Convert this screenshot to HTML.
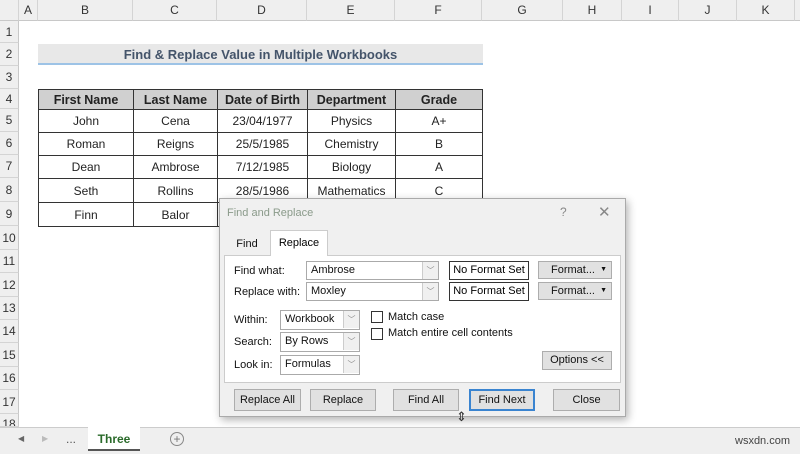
<!DOCTYPE html>
<html><head><meta charset="utf-8"><style>
*{box-sizing:border-box;margin:0;padding:0}
body{width:800px;height:454px;overflow:hidden;background:#fff;font-family:"Liberation Sans",sans-serif;position:relative}
.a{position:absolute}
.ch{position:absolute;top:0;height:21px;background:#efefef;border-right:1px solid #d4d4d4;border-bottom:1px solid #c8c8c8;font-size:12px;color:#333;text-align:center;line-height:21px}
.rh{position:absolute;left:0;width:19px;background:#efefef;border-right:1px solid #c8c8c8;border-bottom:1px solid #d4d4d4;font-size:12px;color:#333;text-align:center}
table{position:absolute;left:38px;top:89px;border-collapse:collapse;font-size:12px;color:#222}
td{border:1px solid #333;text-align:center;padding:0}
.btn{position:absolute;height:22px;background:#e1e1e1;border:1px solid #adadad;font-size:11px;text-align:center;line-height:20px;color:#111}
.lbl{position:absolute;font-size:11px;color:#111}
.inp{position:absolute;height:19px;background:#fff;border:1px solid #aaa;font-size:11px;line-height:17px;padding-left:4px;color:#111}
.dd{position:absolute;right:0;top:0;width:16px;height:17px;border-left:1px solid #ccc;background:#f0f0f0;color:#888;font-size:8px;text-align:center;line-height:17px}
.cb{position:absolute;width:12px;height:12px;border:1px solid #333;background:#fff}
</style></head><body>
<div class="ch" style="left:0;width:19px"></div>
<div class="ch" style="left:19px;width:19px">A</div>
<div class="ch" style="left:38px;width:95px">B</div>
<div class="ch" style="left:133px;width:84px">C</div>
<div class="ch" style="left:217px;width:90px">D</div>
<div class="ch" style="left:307px;width:88px">E</div>
<div class="ch" style="left:395px;width:87px">F</div>
<div class="ch" style="left:482px;width:81px">G</div>
<div class="ch" style="left:563px;width:59px">H</div>
<div class="ch" style="left:622px;width:57px">I</div>
<div class="ch" style="left:679px;width:58px">J</div>
<div class="ch" style="left:737px;width:58px">K</div>
<div class="ch" style="left:795px;width:10px"></div>

<div class="rh" style="top:21px;height:22px;line-height:22px">1</div>
<div class="rh" style="top:43px;height:23px;line-height:23px">2</div>
<div class="rh" style="top:66px;height:23px;line-height:23px">3</div>
<div class="rh" style="top:89px;height:20px;line-height:20px">4</div>
<div class="rh" style="top:109px;height:23px;line-height:23px">5</div>
<div class="rh" style="top:132px;height:23px;line-height:23px">6</div>
<div class="rh" style="top:155px;height:23px;line-height:23px">7</div>
<div class="rh" style="top:178px;height:24px;line-height:24px">8</div>
<div class="rh" style="top:202px;height:24px;line-height:24px">9</div>
<div class="rh" style="top:226px;height:24px;line-height:24px">10</div>
<div class="rh" style="top:250px;height:23px;line-height:23px">11</div>
<div class="rh" style="top:273px;height:24px;line-height:24px">12</div>
<div class="rh" style="top:297px;height:23px;line-height:23px">13</div>
<div class="rh" style="top:320px;height:23px;line-height:23px">14</div>
<div class="rh" style="top:343px;height:24px;line-height:24px">15</div>
<div class="rh" style="top:367px;height:23px;line-height:23px">16</div>
<div class="rh" style="top:390px;height:24px;line-height:24px">17</div>
<div class="rh" style="top:414px;height:13px;line-height:20px;overflow:hidden">18</div>

<div class="a" style="left:38px;top:44px;width:445px;height:21px;background:#e8e8e8;border-bottom:2px solid #9dc3e6;font-size:13px;font-weight:bold;color:#44546a;text-align:center;line-height:22px">Find &amp; Replace Value in Multiple Workbooks</div>

<table>
<tr style="height:20px;background:#d0d0d0;font-weight:bold;font-size:12.5px"><td style="width:95px">First Name</td><td style="width:84px">Last Name</td><td style="width:90px">Date of Birth</td><td style="width:88px">Department</td><td style="width:87px">Grade</td></tr>
<tr style="height:23px"><td>John</td><td>Cena</td><td>23/04/1977</td><td>Physics</td><td>A+</td></tr>
<tr style="height:23px"><td>Roman</td><td>Reigns</td><td>25/5/1985</td><td>Chemistry</td><td>B</td></tr>
<tr style="height:23px"><td>Dean</td><td>Ambrose</td><td>7/12/1985</td><td>Biology</td><td>A</td></tr>
<tr style="height:24px"><td>Seth</td><td>Rollins</td><td>28/5/1986</td><td>Mathematics</td><td>C</td></tr>
<tr style="height:24px"><td>Finn</td><td>Balor</td><td></td><td></td><td></td></tr>
</table>

<!-- dialog -->
<div class="a" style="left:219px;top:198px;width:407px;height:219px;background:#f0f0f0;border:1px solid #aaa;box-shadow:2px 3px 8px rgba(0,0,0,.3)">
 <div class="a" style="left:7px;top:8px;font-size:11px;color:#8a9a8a">Find and Replace</div>
 <div class="a" style="left:340px;top:6px;font-size:12px;color:#888">?</div>
 <div class="a" style="left:378px;top:4px;font-size:15px;color:#888">✕</div>
 <div class="a" style="left:6px;top:34px;width:42px;height:22px;font-size:11px;text-align:center;line-height:22px;color:#111">Find</div>
 <div class="a" style="left:50px;top:31px;width:58px;height:26px;background:#fff;border:1px solid #ccc;border-bottom:none;font-size:11px;text-align:center;line-height:24px;z-index:2">Replace</div>
 <div class="a" style="left:4px;top:56px;width:397px;height:128px;background:#fff;border:1px solid #ccc">
  <div class="lbl" style="left:9px;top:9px">Find what:</div>
  <div class="inp" style="left:81px;top:5px;width:133px">Ambrose<div class="dd">﹀</div></div>
  <div class="a" style="left:224px;top:5px;width:80px;height:19px;border:1px solid #333;font-size:11px;text-align:center;line-height:17px">No Format Set</div>
  <div class="btn" style="left:313px;top:5px;width:74px;height:18px;line-height:16px;text-align:right;padding-right:16px">Format...<span class="a" style="right:4px;font-size:7px">▼</span></div>
  <div class="lbl" style="left:9px;top:30px">Replace with:</div>
  <div class="inp" style="left:81px;top:26px;width:133px">Moxley<div class="dd">﹀</div></div>
  <div class="a" style="left:224px;top:26px;width:80px;height:19px;border:1px solid #333;font-size:11px;text-align:center;line-height:17px">No Format Set</div>
  <div class="btn" style="left:313px;top:26px;width:74px;height:18px;line-height:16px;text-align:right;padding-right:16px">Format...<span class="a" style="right:4px;font-size:7px">▼</span></div>
  <div class="lbl" style="left:9px;top:58px">Within:</div>
  <div class="inp" style="left:55px;top:54px;width:80px;height:20px">Workbook<div class="dd">﹀</div></div>
  <div class="lbl" style="left:9px;top:80px">Search:</div>
  <div class="inp" style="left:55px;top:76px;width:80px;height:20px">By Rows<div class="dd">﹀</div></div>
  <div class="lbl" style="left:9px;top:103px">Look in:</div>
  <div class="inp" style="left:55px;top:99px;width:80px;height:20px">Formulas<div class="dd">﹀</div></div>
  <div class="cb" style="left:146px;top:55px"></div><div class="lbl" style="left:163px;top:55px">Match case</div>
  <div class="cb" style="left:146px;top:72px"></div><div class="lbl" style="left:163px;top:71px">Match entire cell contents</div>
  <div class="btn" style="left:317px;top:95px;width:70px;height:19px;line-height:17px">Options &lt;&lt;</div>
 </div>
 <div class="btn" style="left:14px;top:190px;width:67px">Replace All</div>
 <div class="btn" style="left:90px;top:190px;width:66px">Replace</div>
 <div class="btn" style="left:173px;top:190px;width:66px">Find All</div>
 <div class="btn" style="left:249px;top:190px;width:66px;border:2px solid #3a84d0;line-height:18px">Find Next</div>
 <div class="btn" style="left:333px;top:190px;width:67px">Close</div>
</div>
<div class="a" style="left:456px;top:409px;font-size:13px;color:#333">⇕</div>

<!-- tab bar -->
<div class="a" style="left:0;top:427px;width:800px;height:27px;background:#efefef;border-top:1px solid #ccc"></div>
<div class="a" style="left:18px;top:434px;font-size:8px;color:#666">◀</div>
<div class="a" style="left:42px;top:434px;font-size:8px;color:#bbb">▶</div>
<div class="a" style="left:66px;top:432px;font-size:12px;color:#555">...</div>
<div class="a" style="left:88px;top:427px;width:52px;height:24px;background:#fff;border-bottom:2px solid #555;font-size:12px;font-weight:bold;color:#2a6a2a;text-align:center;line-height:24px">Three</div>
<div class="a" style="left:170px;top:432px;width:14px;height:14px;border:1px solid #888;border-radius:50%;font-size:12px;color:#777;text-align:center;line-height:12px">+</div>
<div class="a" style="left:735px;top:435px;font-size:11px;color:#444">wsxdn.com</div>
</body></html>
